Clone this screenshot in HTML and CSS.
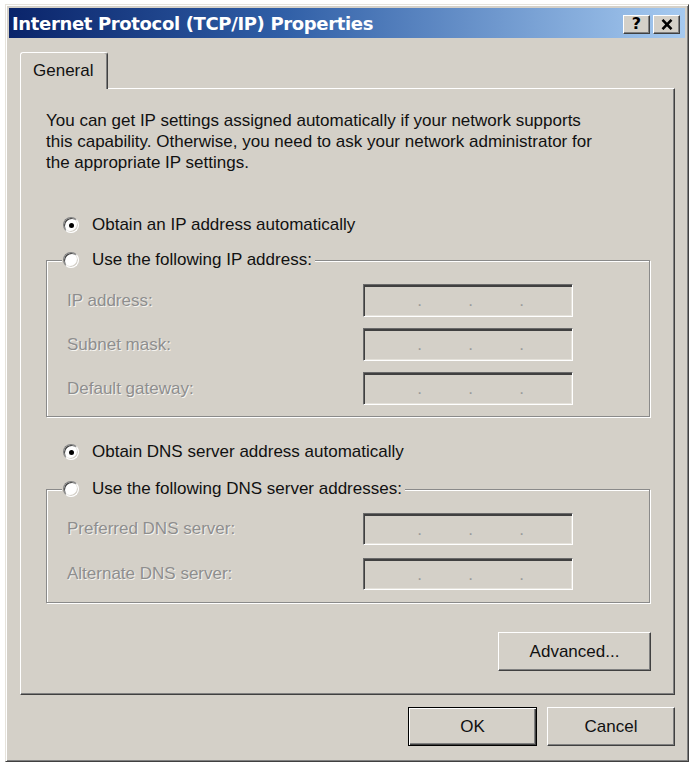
FILE: index.html
```html
<!DOCTYPE html>
<html>
<head>
<meta charset="utf-8">
<title>Internet Protocol (TCP/IP) Properties</title>
<link rel="stylesheet" href="styles.css">
</head>
<body>
<div class="window">
  <div class="titlebar">
    <span class="title">Internet Protocol (TCP/IP) Properties</span>
    <div class="tb-buttons">
      <span class="tb-btn help">?</span>
      <span class="tb-btn close"><svg width="12" height="11" viewBox="0 0 12 11"><path d="M1.5 0.8 L10.5 10.2 M10.5 0.8 L1.5 10.2" stroke="#000" stroke-width="2.5" fill="none"/></svg></span>
    </div>
  </div>
  <div class="body">
    <div class="tabs"><div class="tab">General</div></div>
    <div class="panel">
      <p class="intro">You can get IP settings assigned automatically if your network supports<br>this capability. Otherwise, you need to ask your network administrator for<br>the appropriate IP settings.</p>

      <div class="radio-row auto-ip"><span class="radio checked"></span><span>Obtain an IP address automatically</span></div>

      <fieldset class="group ip-group">
        <legend><span class="radio"></span><span>Use the following IP address:</span></legend>
        <div class="field-grid">
          <span class="dis">IP address:</span>
          <div class="ipbox"><span>.</span><span>.</span><span>.</span></div>
          <span class="dis">Subnet mask:</span>
          <div class="ipbox"><span>.</span><span>.</span><span>.</span></div>
          <span class="dis">Default gateway:</span>
          <div class="ipbox"><span>.</span><span>.</span><span>.</span></div>
        </div>
      </fieldset>

      <div class="radio-row auto-dns"><span class="radio checked"></span><span>Obtain DNS server address automatically</span></div>

      <fieldset class="group dns-group">
        <legend><span class="radio"></span><span>Use the following DNS server addresses:</span></legend>
        <div class="field-grid">
          <span class="dis">Preferred DNS server:</span>
          <div class="ipbox"><span>.</span><span>.</span><span>.</span></div>
          <span class="dis">Alternate DNS server:</span>
          <div class="ipbox"><span>.</span><span>.</span><span>.</span></div>
        </div>
      </fieldset>

      <div class="adv-row"><button class="btn adv">Advanced...</button></div>
    </div>
    <div class="dialog-buttons">
      <button class="btn ok">OK</button>
      <button class="btn cancel">Cancel</button>
    </div>
  </div>
</div>
</body>
</html>
```

FILE: styles.css
```css
html, body {
  margin: 0;
  background: #ffffff;
}
body {
  padding: 4px 0 0 5px;
  font-family: "Liberation Sans", Arial, sans-serif;
  font-size: 17px;
  color: #111;
}
.window {
  width: 684px;
  height: 758px;
  box-sizing: border-box;
  background: #d4d0c8;
  border: 1px solid;
  border-color: #e6e3dc #404040 #404040 #e6e3dc;
  box-shadow: inset 1px 1px 0 #ffffff, inset -1px -1px 0 #808080;
  padding: 3px;
  display: flex;
  flex-direction: column;
}
.titlebar {
  height: 30px;
  flex: none;
  display: flex;
  align-items: center;
  justify-content: space-between;
  background: linear-gradient(90deg, #0a246a 0%, #2f5ea6 40%, #a6caf0 100%);
  padding: 0 5px 0 3px;
}
.title {
  color: #ffffff;
  font-family: "DejaVu Sans", sans-serif;
  font-weight: bold;
  font-size: 18px;
  letter-spacing: -0.35px;
  white-space: nowrap;
}
.tb-buttons {
  display: flex;
  gap: 3px;
  margin-top: 2px;
}
.tb-btn {
  width: 27px;
  height: 19px;
  box-sizing: border-box;
  background: #d4d0c8;
  border: 1px solid;
  border-color: #ffffff #404040 #404040 #ffffff;
  box-shadow: inset -1px -1px 0 #808080;
  display: flex;
  align-items: center;
  justify-content: center;
}
.help {
  font-family: "DejaVu Sans", sans-serif;
  font-weight: bold;
  font-size: 16px;
  color: #000;
  line-height: 1;
}
.body {
  flex: 1;
  display: flex;
  flex-direction: column;
  padding: 14px 10px 12px 11px;
}
.tabs {
  display: flex;
  position: relative;
  z-index: 1;
}
.tab {
  width: 88px;
  height: 37px;
  box-sizing: border-box;
  margin-bottom: -1px;
  background: #d4d0c8;
  border: 1px solid;
  border-bottom: none;
  border-color: #ffffff #404040 transparent #ffffff;
  border-radius: 3px 3px 0 0;
  box-shadow: inset -1px 0 0 #808080;
  padding-left: 12px;
  line-height: 35px;
  font-size: 17px;
}
.panel {
  height: 607px;
  box-sizing: border-box;
  border: 1px solid;
  border-color: #ffffff #404040 #404040 #ffffff;
  box-shadow: inset -1px -1px 0 #808080;
  padding: 21px 24px 0 25px;
}
.intro {
  margin: 0;
  line-height: 21px;
  white-space: nowrap;
}
.radio-row {
  display: flex;
  align-items: center;
  gap: 13px;
  height: 24px;
  padding-left: 17px;
}
.auto-ip { margin-top: 40px; }
.auto-dns { margin-top: 23px; }
.radio {
  flex: none;
  width: 16px;
  height: 16px;
  box-sizing: border-box;
  border-radius: 50%;
  background: #ffffff;
  border: 1px solid;
  border-color: #808080 #ffffff #ffffff #808080;
  box-shadow: inset 1px 1px 0 #404040, inset -1px -1px 0 #d4d0c8;
  display: flex;
  align-items: center;
  justify-content: center;
}
.radio.checked::after {
  content: "";
  width: 5px;
  height: 5px;
  border-radius: 50%;
  background: #000;
}
.group {
  margin: 0;
  padding: 12px 0 11px 20px;
  border: 1px solid #8a8a8a;
  box-shadow: inset 1px 1px 0 #ffffff, 1px 1px 0 #ffffff;
  min-width: 0;
}
.ip-group { margin-top: 11px; }
.dns-group { margin-top: 13px; padding-bottom: 12px; }
.group legend {
  display: flex;
  align-items: center;
  gap: 13px;
  height: 24px;
  margin-left: -5px;
  padding: 0 3px 0 1px;
  background: #d4d0c8;
}
.field-grid {
  display: grid;
  grid-template-columns: 296px 210px;
  grid-auto-rows: 33px;
  row-gap: 11px;
  align-items: center;
}
.dns-group .field-grid {
  grid-auto-rows: 32px;
  row-gap: 13px;
}
.dis {
  color: #8e8e8e;
  text-shadow: 1px 1px 0 #f4f3ef;
}
.ipbox {
  height: 100%;
  box-sizing: border-box;
  border: 1px solid;
  border-color: #6a6a6a #ffffff #ffffff #6a6a6a;
  box-shadow: inset 1px 1px 0 #404040, inset 0 2px 0 #404040, inset -1px -1px 0 #e4e1da;
  background: #d4d0c8;
  display: flex;
  align-items: center;
  padding-left: 53px;
  gap: 46px;
}
.ipbox span {
  width: 5px;
  text-align: center;
  color: #9a9a9a;
  line-height: 1;
}
.adv-row {
  display: flex;
  justify-content: flex-end;
  margin-top: 29px;
  margin-right: -1px;
}
.btn {
  font-family: "Liberation Sans", Arial, sans-serif;
  font-size: 17px;
  color: #111;
  background: #d4d0c8;
  border: 1px solid;
  border-color: #ffffff #404040 #404040 #ffffff;
  box-shadow: inset -1px -1px 0 #808080;
  padding: 0;
  height: 39px;
  box-sizing: border-box;
}
.adv { width: 153px; }
.dialog-buttons {
  display: flex;
  justify-content: flex-end;
  gap: 10px;
  margin-top: 12px;
}
.ok {
  width: 129px;
  border-color: #000;
  box-shadow: inset 1px 1px 0 #ffffff, inset -1px -1px 0 #404040, inset -2px -2px 0 #808080;
}
.cancel { width: 128px; }
```
